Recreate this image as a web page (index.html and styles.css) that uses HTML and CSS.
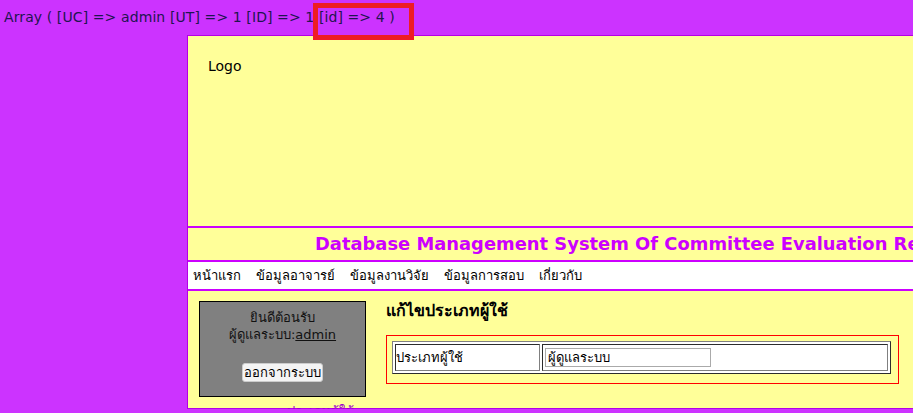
FILE: index.html
```html
<!DOCTYPE html>
<html lang="th">
<head>
    <meta charset="UTF-8">
    <title>แก้ไขประเภทผู้ใช้</title>
    <link rel="stylesheet" href="styles.css">
</head>
<body>
    <div class="dump">Array ( [UC] =&gt; admin [UT] =&gt; 1 [ID] =&gt; 1 [id] =&gt; 4 )</div>
    <div class="mark"></div>
    <div class="page">
        <div class="logo">Logo</div>
        <div class="title">Database Management System Of Committee Evaluation Research</div>
        <div class="menu">
            <a href="#">หน้าแรก</a>
            <a href="#">ข้อมูลอาจารย์</a>
            <a href="#">ข้อมูลงานวิจัย</a>
            <a href="#">ข้อมูลการสอบ</a>
            <a href="#">เกี่ยวกับ</a>
        </div>
        <div class="main">
            <div class="left">
                <div class="side">
                    <div>ยินดีต้อนรับ</div>
                    <div>ผู้ดูแลระบบ:<u>admin</u></div>
                    <button class="logout">ออกจากระบบ</button>
                </div>
                <div class="sublink">ประเภทผู้ใช้</div>
            </div>
            <div class="content">
                <h3>แก้ไขประเภทผู้ใช้</h3>
                <div class="formbox">
                    <table class="form" border="1">
                        <tr>
                            <td class="label">ประเภทผู้ใช้</td>
                            <td><input type="text" value="ผู้ดูแลระบบ"></td>
                        </tr>
                    </table>
                </div>
            </div>
        </div>
    </div>
</body>
</html>
```

FILE: styles.css
```css
html, body {
    overflow: hidden;
}
body {
    margin: 0;
    padding: 6px 4px 0;
    background-color: #cc33ff;
    font-family: "DejaVu Sans", "Noto Sans", sans-serif;
    font-size: 14px;
    color: #1e1550;
}
.dump {
    height: 29px;
    line-height: 22px;
    letter-spacing: 0.1px;
}
.mark {
    position: absolute;
    left: 313px;
    top: 3px;
    width: 91px;
    height: 27px;
    border: 5px solid #ee1c24;
    z-index: 2;
}
.page {
    margin-left: 183px;
    width: 1000px;
    background: #ffff99;
    border: 1px solid #b300e6;
    height: 372px;
    color: #000;
}
.logo {
    height: 190px;
    box-sizing: border-box;
    padding: 22px 20px;
    font-size: 14px;
}
.title {
    border-top: 2px solid #cc00ff;
    border-bottom: 2px solid #cc00ff;
    height: 32px;
    line-height: 32px;
    padding-left: 127px;
    font-size: 17.9px;
    font-weight: bold;
    color: #cc00ff;
    white-space: nowrap;
}
.menu {
    background: #fff;
    border-bottom: 2px solid #cc00ff;
    height: 27px;
    line-height: 27px;
    padding-left: 5px;
    display: flex;
    gap: 15px;
    font-size: 13px;
}
.menu a {
    color: #000;
    text-decoration: none;
}
.main {
    display: flex;
    gap: 20px;
    padding: 10px 11px 0;
}
.left {
    width: 167px;
}
.side {
    height: 96px;
    box-sizing: border-box;
    background: #808080;
    border: 1px solid #000;
    text-align: center;
    padding-top: 7px;
    font-size: 13px;
    line-height: 17px;
    color: #111;
}
.logout {
    margin-top: 20px;
    font-family: inherit;
    font-size: 13px;
    height: 19px;
    line-height: 15px;
    padding: 0 1px;
    background: #f4f4f4;
    border: 1px solid #ccc;
    border-radius: 3px;
}
.sublink {
    margin-top: 4px;
    padding-left: 88px;
    font-size: 13px;
    color: #9900cc;
    white-space: nowrap;
}
.content h3 {
    margin: 0 0 15px;
    height: 19px;
    line-height: 19px;
    font-size: 16px;
}
.formbox {
    width: 511px;
    height: 42px;
    border: 1px solid #ff0000;
    padding-top: 5px;
    box-sizing: content-box;
}
.form {
    margin-left: 5px;
    width: 499px;
    background: #fff;
    border-spacing: 2px;
}
.form td {
    height: 25px;
    padding: 0;
    font-size: 13px;
}
.form .label {
    width: 143px;
}
.form input {
    width: 160px;
    height: 17px;
    margin: 2px;
    border: 1px solid #aaa;
    font-family: inherit;
    font-size: 13px;
    padding: 0 2px;
}
```
